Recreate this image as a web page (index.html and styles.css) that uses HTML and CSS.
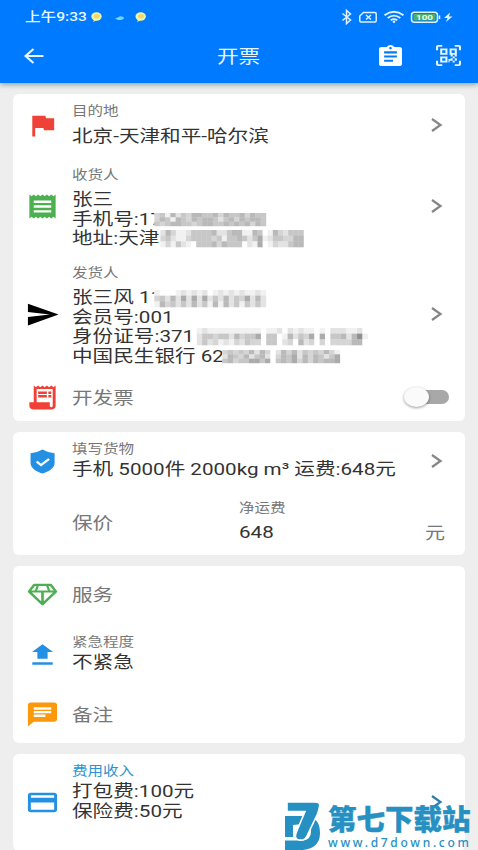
FILE: index.html
```html
<!DOCTYPE html>
<html lang="zh-CN">
<head>
<meta charset="utf-8">
<title>开票</title>
<link rel="stylesheet" href="styles.css">
</head>
<body>
<header class="header">
  <div class="status">
    <span class="clock wide">上午9:33</span>
    <svg class="notes" viewBox="0 0 56 12"><ellipse cx="5.5" cy="5.5" rx="5.2" ry="4.2" fill="#e9f5b5"/><ellipse cx="5.8" cy="5.2" rx="3" ry="2.2" fill="#f3d763"/><path d="M3 9l-1 2 4-2z" fill="#e9f5b5"/><path d="M24 7.5q3-1 5-2.3 4 0 4 2.3-2 2-6 1.5z" fill="#73d4ff"/><ellipse cx="49.700" cy="5.500" rx="5.2" ry="4.2" fill="#e9f5b5"/><ellipse cx="50" cy="5.200" rx="3" ry="2.2" fill="#f3d763"/><path d="M47 9l-1 2 4-2z" fill="#e9f5b5"/></svg>
    <svg class="system" viewBox="0 0 114 16" fill="none" stroke="#dff1ff" stroke-width="1.5">
      <path d="M1.500 4.500l8 6.500-4 3.500V1.500l4 3.500-8 6.500"/>
      <path d="M22.500 3.500H34q1.200 0 1.200 1.200v7q0 1.200-1.200 1.200H20q-1.200 0-1.200-1.200V7z"/><path d="M25 6l5 4.500M30 6l-5 4.500"/>
      <path d="M43.500 6.200q9.500-7 19 0M46.700 8.900q6.300-4.600 12.600 0M49.700 11.300q3.300-2.400 6.600 0" stroke-width="1.900"/><circle cx="53" cy="12.700" r="1.300" fill="#dff1ff" stroke="none"/>
      <rect x="70.500" y="3.200" width="26" height="10" rx="3"/><rect x="72.500" y="5" width="22" height="6.400" rx="1" fill="#4caf70" stroke="none"/><path d="M98.500 6.500v3.500"/>
      <text class="battery" x="75" y="11" textLength="17" lengthAdjust="spacingAndGlyphs">100</text>
      <path d="M109 3.500l-6 5.500h3.500l-1.500 4 6.500-5.500h-3.500z" fill="#dff1ff" stroke="none"/>
    </svg>
  </div>
  <div class="toolbar">
    <svg class="back" viewBox="0 0 20 16" fill="none" stroke="#e6f6ff" stroke-width="2.100"><path d="M19.500 8H1.500M9.500 1L1.500 8l8 7"/></svg>
    <h1 class="title wide">开票</h1>
    <svg class="clip" viewBox="3 1 18 20" preserveAspectRatio="none" fill="#fff"><path d="M19 3h-4.180C14.400 1.840 13.300 1 12 1s-2.400.84-2.820 2H5c-1.100 0-2 .9-2 2v14c0 1.100.9 2 2 2h14c1.100 0 2-.9 2-2V5c0-1.100-.9-2-2-2zm-7 0c.55 0 1 .45 1 1s-.45 1-1 1-1-.45-1-1 .45-1 1-1zm2 14H7v-2h7v2zm3-4H7v-2h10v2zm0-4H7V7h10v2z"/></svg>
    <svg class="scan" viewBox="0 0 24 24" preserveAspectRatio="none" fill="#e6f6ff"><path d="M4 4h7v7H4V4m16 0v7h-7V4h7m-6 11h2v-2h-2v-2h2v2h2v-2h2v2h-2v2h2v3h-2v2h-2v-2h-3v2h-1v-4h2v-1m2 0v3h2v-3h-2M4 20v-7h7v7H4M6 6v3h3V6H6m9 0v3h3V6h-3M6 15v3h3v-3H6M2 2v4H0V2a2 2 0 0 1 2-2h4v2H2m20-2a2 2 0 0 1 2 2v4h-2V2h-4V0h4M2 18v4h4v2H2a2 2 0 0 1-2-2v-4h2m20 4v-4h2v4a2 2 0 0 1-2 2h-4v-2h4z"/></svg>
  </div>
</header>
<main class="content">
  <section class="card">
    <div class="row r-dest">
      <svg class="icon" viewBox="0 0 24 24" preserveAspectRatio="none" fill="#ef4136"><path d="M14.400 6L14 4H5v17h2v-7h5.600l.4 2h7V6z"/></svg>
      <div class="text"><div class="label">目的地</div><div class="line">北京-天津和平-哈尔滨</div></div>
      <svg class="chev" viewBox="0 0 11 14"><path d="M1 1l8.500 6L1 13"/></svg>
    </div>
    <div class="row r-recv">
      <svg class="icon" viewBox="0 0 24 24" preserveAspectRatio="none" fill="#4caf50"><path d="M18 17H6v-2h12v2zm0-4H6v-2h12v2zm0-4H6V7h12v2zM3 22l1.500-1.500L6 22l1.500-1.500L9 22l1.500-1.500L12 22l1.500-1.500L15 22l1.500-1.500L18 22l1.500-1.500L21 22V2l-1.500 1.500L18 2l-1.500 1.500L15 2l-1.500 1.500L12 2l-1.500 1.500L9 2 7.500 3.500 6 2 4.500 3.500 3 2v20z"/></svg>
      <div class="text"><div class="label">收货人</div><div class="line">张三</div>
        <div class="line">手机号:17<svg class="mosaic m-phone" data-rows="341524355445354453544,354154354554245354554,434554434554454545354"></svg></div>
        <div class="line">地址:天津<svg class="mosaic m-addr" data-rows="2531124444522455115401532444,3421134444341445424612443355,1314210444535444021601322455"></svg></div>
      </div>
      <svg class="chev" viewBox="0 0 11 14"><path d="M1 1l8.500 6L1 13"/></svg>
    </div>
    <div class="row r-send">
      <svg class="icon" viewBox="0 0 24 24" preserveAspectRatio="none" fill="#000"><path d="M2.010 21L23 12 2.010 3 2 10l15 2-15 2z"/></svg>
      <div class="text"><div class="label">发货人</div>
        <div class="line">张三风 11<svg class="mosaic m-name" data-rows="100012121201212121121,342526262624252436252,153424252415152414242"></svg></div>
        <div class="line">会员号:001</div>
        <div class="line">身份证号:371<svg class="mosaic m-id" data-rows="12111111111101120212110102221120,24434425344604401524360604452581,24231213243304402305230303333550"></svg></div>
        <div class="line">中国民生银行 62<svg class="mosaic m-bank" data-rows="3434352530253524343531,2543524520354625354246,4534466460454635354556"></svg></div>
      </div>
      <svg class="chev" viewBox="0 0 11 14"><path d="M1 1l8.500 6L1 13"/></svg>
    </div>
    <div class="row r-inv">
      <svg class="icon" viewBox="0 0 24 24" preserveAspectRatio="none" fill="#ef4136"><path d="M19.500 3.500L18 2l-1.500 1.500L15 2l-1.500 1.500L12 2l-1.500 1.500L9 2 7.500 3.500 6 2v14H3v3c0 1.660 1.340 3 3 3h12c1.660 0 3-1.340 3-3V2l-1.500 1.500zM19 19c0 .55-.45 1-1 1s-1-.45-1-1v-3H8V5h11v14z"/><path d="M9 7h6v2H9zM16 7h2v2h-2zM9 10h6v2H9zM16 10h2v2h-2z"/></svg>
      <div class="single">开发票</div>
      <div class="switch"><span class="knob"></span></div>
    </div>
  </section>
  <section class="card">
    <div class="row tight r-goods">
      <svg class="icon" viewBox="0 0 24 24" preserveAspectRatio="none"><path fill="#2490e3" d="M3.800 5.200Q8.500 4.500 12 2q3.500 2.500 8.300 3.200V13c0 4.500-4 7.400-8.300 9-4.300-1.600-8.200-4.500-8.200-9z"/><path d="M8 12l3 3 5.500-5" fill="none" stroke="#fff" stroke-width="1.700"/></svg>
      <div class="text"><div class="label">填写货物</div><div class="line">手机 5000件 2000kg m³ 运费:648元</div></div>
      <svg class="chev" viewBox="0 0 11 14"><path d="M1 1l8.500 6L1 13"/></svg>
    </div>
    <div class="row r-price">
      <div class="single insured">保价</div>
      <div class="fee"><div class="label">净运费</div><div class="line">648</div></div>
      <div class="unit">元</div>
    </div>
  </section>
  <section class="card">
    <div class="row r-serv">
      <svg class="icon" viewBox="0 0 24 24" preserveAspectRatio="none" fill="none" stroke="#4caf50" stroke-width="1.800" stroke-linejoin="round"><path d="M6.300 4h11.400l3.500 5.500L12 20 2.800 9.500zM2.800 9.500h18.400M12 9.500V19"/><path d="M9 4L7.300 9.500M15 4l1.700 5.500" stroke-width="1.500"/></svg>
      <div class="single">服务</div>
    </div>
    <div class="row tight r-urg">
      <svg class="icon" viewBox="0 0 24 24" preserveAspectRatio="none" fill="#2490e3"><path d="M8.500 15.500h7V10h3.700L12 3.500 4.800 10h3.700zM5 18.500h14v2H5z"/></svg>
      <div class="text"><div class="label">紧急程度</div><div class="line">不紧急</div></div>
    </div>
    <div class="row r-note">
      <svg class="icon" viewBox="0 0 24 24" preserveAspectRatio="none" fill="#fb980c"><path d="M20 2H4c-1.100 0-2 .9-2 2v18l4-4h14c1.100 0 2-.9 2-2V4c0-1.100-.9-2-2-2zm-6 12H6v-2h8v2zm4-3H6V9h12v2zm0-3H6V6h12v2z"/></svg>
      <div class="single">备注</div>
    </div>
  </section>
  <section class="card">
    <div class="row tight r-income">
      <svg class="icon" viewBox="0 0 24 24" preserveAspectRatio="none" fill="#2490e3"><path d="M20 4H4c-1.110 0-2 .89-2 2v12c0 1.110.89 2 2 2h16c1.110 0 2-.89 2-2V6c0-1.110-.89-2-2-2zm0 14H4v-6h16v6zm0-10H4V6h16v2z"/></svg>
      <div class="text"><div class="label accent">费用收入</div><div class="line">打包费:100元</div><div class="line">保险费:50元</div></div>
      <svg class="chev blue" viewBox="0 0 11 14"><path d="M1 1l8.500 6L1 13"/></svg>
    </div>
  </section>
</main>
<aside class="brand">
  <svg class="brand-mark" viewBox="0 0 36 48"><path d="M0 14h22q13 2 13 17T18 48H0V38.500h17q9 0 9-9T18 22l-10 1v12H0z" fill="#2790c2"/><path d="M2 0h28q6 0 4.500 5-.5 3-2 7L22 34q-2 5-8 4-5-1-3-7l9-21.500H2z" fill="#2790c2" stroke="#fff" stroke-width="1.600"/></svg>
  <div class="brand-text"><div class="brand-name">第七下载站</div><div class="brand-url">www.d7down.com</div></div>
</aside>
<script src="mosaic.js"></script>
</body>
</html>
```
FILE: styles.css
```css
* { box-sizing: border-box; }
body {
  margin: 0;
  height: 850px;
  overflow: hidden;
  position: relative;
  background: #eee;
  color: #333;
  font-family: Roboto, "Noto Sans CJK SC", sans-serif;
}
svg { display: block; flex: none; overflow: visible; }
.header {
  height: 83px;
  background: #007bff;
  color: #e6f6ff;
  box-shadow: 0 2px 5px rgba(40, 80, 90, .45);
  position: relative;
}
.status { height: 34px; display: flex; align-items: center; padding: 0 23px 0 25px; }
.wide { transform: scaleX(1.2); transform-origin: left center; white-space: nowrap; }
.clock { width: 66px; font-size: 13px; font-weight: 500; line-height: 20px; }
.notes { width: 56px; height: 12px; }
.system { width: 114px; height: 16px; margin-left: auto; }
.battery { font: 700 7.5px Roboto, sans-serif; fill: #e5ffe5; stroke: none; }
.toolbar { height: 45px; display: flex; align-items: center; padding: 0 17px 0 24px; }
.back { width: 20px; height: 16px; margin-top: -2px; }
.title { margin: 1px 0 0 173px; width: 162px; font-size: 18px; line-height: 26px; font-weight: 400; }
.clip { width: 23px; height: 21px; margin-top: -2px; }
.scan { width: 25px; height: 21px; margin: -2px 0 0 auto; }
.content { padding: 11px 13.5px 0 13px; display: flex; flex-direction: column; gap: 11px; }
.card { background: #fff; border-radius: 6px; flex: none; }
.row { display: flex; align-items: center; padding: 0 23px 0 11.500px; }
.r-dest { height: 63px; }
.r-recv { height: 99px; }
.r-send { height: 117px; }
.r-inv { height: 48px; padding-right: 16px; }
.r-goods { height: 58px; }
.r-price { height: 65px; padding-left: 59px; padding-right: 20px; }
.r-serv { height: 57px; }
.r-urg { height: 62px; }
.r-note { height: 58px; }
.r-income { height: 97px; }
.icon { width: 35px; height: 29px; }
.text { align-self: stretch; width: 340px; margin-left: 12.500px; padding-top: 8px; }
.r-recv .text { padding-top: 9px; }
.r-urg .text { padding-top: 10px; }
.label, .line, .single, .unit { transform: scaleX(1.212); transform-origin: left center; white-space: nowrap; width: max-content; }
.label { height: 18px; line-height: 18px; margin-bottom: 6px; font-size: 12.800px; color: #777; }
.tight .label { margin-bottom: 2px; }
.r-dest .label { margin-bottom: 6.500px; }
.label.accent { color: #2f93d0; }
.line { position: relative; height: 19.500px; line-height: 19.500px; font-size: 17px; }
.single { margin: 1px 0 0 12.500px; font-size: 17px; line-height: 24px; color: #777; }
.chev { width: 11px; height: 14px; margin: -1px 0 0 auto; fill: none; stroke: #858585; stroke-width: 2.200px; }
.chev.blue { stroke: #2b7fb0; }
.mosaic { position: absolute; background: #f4f4f4; }
.m-phone { left: 68px; top: 3px; width: 92px; height: 13px; }
.m-addr { left: 73px; top: 1px; width: 118px; height: 17px; }
.m-name { left: 68px; top: 1.500px; width: 92px; height: 17px; }
.m-id { left: 103px; top: 1px; width: 141px; height: 17px; }
.m-bank { left: 124px; top: 3px; width: 97px; height: 13px; }
.switch { margin-left: auto; width: 42px; height: 14px; border-radius: 7px; background: linear-gradient(90deg, transparent 8px, #a8a8a8 8px); position: relative; }
.knob { position: absolute; left: -3px; top: -3px; width: 25px; height: 20px; border-radius: 50%; background: #fafafa; box-shadow: 0 1px 3px rgba(0, 0, 0, .4); }
.r-price .insured { margin: 0; }
.fee { margin-left: 133px; width: 160px; align-self: stretch; padding-top: 9px; }
.unit { margin: 18px 0 0 auto; width: 20px; font-size: 16.500px; color: #777; flex: none; }
.brand { position: absolute; left: 285px; top: 802px; display: flex; gap: 7px; color: #2790c2; }
.brand-mark { width: 36px; height: 48px; }
.brand-name { font: 900 28.500px/30px "Noto Sans CJK SC", sans-serif; white-space: nowrap; margin-top: 1px; -webkit-text-stroke: .4px #2790c2; }
.brand-url { font: 500 12px/14px "Noto Sans", sans-serif; letter-spacing: 2.700px; margin-top: 3px; }
```
FILE: mosaic.js
```js
// Fill each masked field with grey cells; digits give cell darkness.
document.querySelectorAll('.mosaic').forEach(function (svg) {
  var rows = svg.dataset.rows.split(',');
  svg.setAttribute('viewBox', '0 0 ' + rows[0].length + ' ' + rows.length);
  svg.setAttribute('preserveAspectRatio', 'none');
  rows.forEach(function (row, y) {
    row.split('').forEach(function (d, x) {
      var r = document.createElementNS('http://www.w3.org/2000/svg', 'rect');
      var g = 255 - d * 14;
      r.setAttribute('x', x);
      r.setAttribute('y', y);
      r.setAttribute('width', 1.05);
      r.setAttribute('height', 1.05);
      r.setAttribute('fill', 'rgb(' + g + ',' + g + ',' + g + ')');
      svg.appendChild(r);
    });
  });
});
```
